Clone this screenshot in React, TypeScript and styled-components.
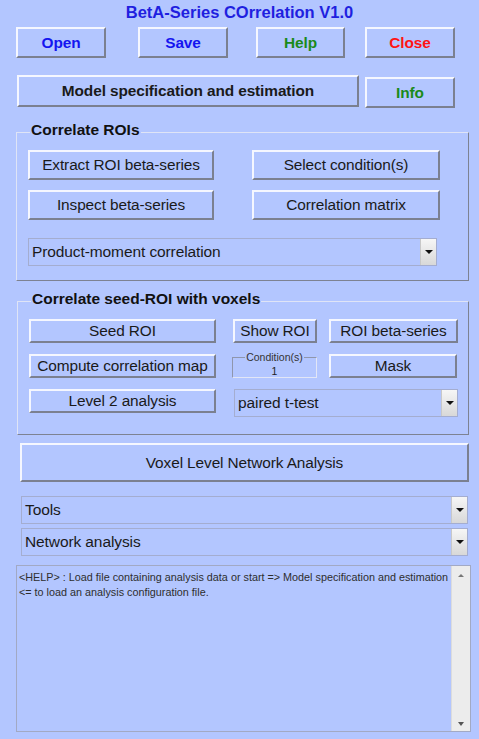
import React from 'react';
import styled, {createGlobalStyle} from 'styled-components';

const GlobalStyle = createGlobalStyle`
  html, body {
    margin: 0;
    padding: 0;
    background: #b3c6ff;
  }
  * {
    box-sizing: border-box;
  }
`

const Page = styled.div`
  width: 479px;
  height: 739px;
  background: #b3c6ff;
  font-family: "Liberation Sans", Arial, sans-serif;
  color: #1a1a1a;
  overflow: hidden;
`
const Title = styled.h1`
  margin: 0;
  height: 26px;
  line-height: 24px;
  font-size: 16.5px;
  font-weight: 700;
  text-align: center;
  color: #1f1fe0;
`
const TopRow = styled.div`
  display: grid;
  grid-template-columns: 122px 118px 109px 90px;
  padding-left: 16px;
  margin-top: 1px;
`
const ModelRow = styled.div`
  display: flex;
  align-items: flex-start;
  gap: 6px;
  padding-left: 17px;
  margin-top: 17px;
`
const Button = styled.button<{$w?: number; $h?: number; $color?: string; $bold?: boolean; $size?: number}>`
  width: ${p => p.$w ?? 90}px;
  height: ${p => p.$h ?? 31}px;
  padding: 0;
  background: #b3c6ff;
  border: 2px solid;
  border-color: #f5f7ff #7b8090 #7b8090 #f5f7ff;
  font-family: "Liberation Sans", Arial, sans-serif;
  font-size: ${p => p.$size ?? 15.4}px;
  font-weight: ${p => (p.$bold ? 700 : 400)};
  color: ${p => p.$color ?? '#1a1a1a'};
  white-space: nowrap;
  letter-spacing: -0.1px;
  cursor: pointer;
`
const Panel = styled.fieldset<{$left: number; $width: number; $top: number; $pb: number}>`
  margin: ${p => p.$top}px 0 0 ${p => p.$left}px;
  width: ${p => p.$width}px;
  padding: 10px 10px ${p => p.$pb}px 11px;
  border: 1px solid;
  border-color: #dfe4f6 #7d8292 #7d8292 #dfe4f6;
  min-width: 0;
`
const Legend = styled.legend`
  padding: 0 1px;
  margin-left: 2px;
  font-size: 15.5px;
  line-height: 16px;
  font-weight: 700;
  color: #111;
  transform: translateY(-2px);
`
const RoiGrid = styled.div`
  display: grid;
  grid-template-columns: 186px 188px;
  grid-auto-rows: 30px;
  column-gap: 38px;
  row-gap: 10px;
`
const SeedGrid = styled.div`
  display: grid;
  grid-template-columns: 187px 89px 129px;
  grid-template-rows: 24px 24px 28px;
  column-gap: 12px;
  row-gap: 11px;
`
const Cell = styled.div<{$span?: number; $ml?: number}>`
  grid-column: span ${p => p.$span ?? 1};
  margin-left: ${p => p.$ml ?? 0}px;
  display: flex;
`
const Select = styled.div<{$w: number; $h: number; $mt?: number; $ml?: number}>`
  display: flex;
  align-items: center;
  width: ${p => p.$w}px;
  height: ${p => p.$h}px;
  margin-top: ${p => p.$mt ?? 0}px;
  margin-left: ${p => p.$ml ?? 0}px;
  border: 1px solid #a4add0;
  background: #b3c6ff;
  font-size: 15.5px;
  color: #1a1a1a;
`
const SelectText = styled.span`
  flex: 1;
  padding-left: 3px;
  white-space: nowrap;
  letter-spacing: -0.1px;
`
const SelectArrow = styled.span`
  width: 16px;
  height: 100%;
  display: flex;
  align-items: center;
  justify-content: center;
  background: linear-gradient(#f6f6f6, #d8d8d8);
  border-left: 1px solid #c8c8c8;
  &::after {
    content: '';
    border-left: 4px solid transparent;
    border-right: 4px solid transparent;
    border-top: 4px solid #111;
  }
`
const CondBox = styled.fieldset`
  margin: -3px 0 0 0;
  padding: 0;
  width: 85px;
  height: 27px;
  border: 1px solid;
  border-color: #8f96ad #e2e6f6 #e2e6f6 #8f96ad;
  text-align: center;
  font-size: 10.5px;
  line-height: 16px;
  color: #222;
  min-width: 0;
`
const CondLegend = styled.legend`
  margin: 0 auto;
  padding: 0 1px;
  font-size: 10.5px;
  line-height: 12px;
  color: #333;
`
const Block = styled.div<{$mt: number; $ml: number}>`
  margin-top: ${p => p.$mt}px;
  margin-left: ${p => p.$ml}px;
`
const HelpBox = styled.div`
  display: flex;
  width: 455px;
  height: 167px;
  margin: 9px 0 0 16px;
  border: 1px solid #a2a9c4;
  background: #b3c6ff;
`
const HelpText = styled.div`
  flex: 1;
  padding: 4px 2px;
  font-size: 10.8px;
  line-height: 15px;
  color: #2e2e2e;
`
const Scrollbar = styled.div`
  width: 19px;
  display: flex;
  flex-direction: column;
  justify-content: space-between;
  align-items: center;
  padding: 8px 0 5px;
  background: #ececec;
  border-left: 1px solid #dcdcdc;
`
const ScrollArrow = styled.span<{$up?: boolean}>`
  border-left: 3px solid transparent;
  border-right: 3px solid transparent;
  ${p => (p.$up ? 'border-bottom: 3px solid #777;' : 'border-top: 4px solid #555;')}
`

const DropDown = ({label, w, h, mt, ml}: {label: string; w: number; h: number; mt?: number; ml?: number}) => (
    <Select $w={w} $h={h} $mt={mt} $ml={ml}>
        <SelectText>{label}</SelectText>
        <SelectArrow/>
    </Select>
)

const App = () => {
    return (
        <Page>
            <GlobalStyle/>
            <Title>BetA-Series COrrelation V1.0</Title>
            <TopRow>
                <Button $bold $color="#1515f0">Open</Button>
                <Button $bold $color="#1515f0">Save</Button>
                <Button $bold $w={89} $color="#1a8a1a">Help</Button>
                <Button $bold $color="#ff1414">Close</Button>
            </TopRow>
            <ModelRow>
                <Button $w={342} $h={32} $bold>Model specification and estimation</Button>
                <Button $bold $color="#1a8a1a" style={{marginTop: 2}}>Info</Button>
            </ModelRow>

            <Panel $left={16} $width={453} $top={16} $pb={14}>
                <Legend>Correlate ROIs</Legend>
                <RoiGrid>
                    <Button $w={186} $h={30}>Extract ROI beta-series</Button>
                    <Button $w={188} $h={30}>Select condition(s)</Button>
                    <Button $w={186} $h={30}>Inspect beta-series</Button>
                    <Button $w={188} $h={30}>Correlation matrix</Button>
                </RoiGrid>
                <DropDown label="Product-moment correlation" w={409} h={28} mt={18}/>
            </Panel>

            <Panel $left={17} $width={452} $top={12} $pb={17}>
                <Legend>Correlate seed-ROI with voxels</Legend>
                <SeedGrid>
                    <Cell><Button $w={187} $h={24}>Seed ROI</Button></Cell>
                    <Cell $ml={5}><Button $w={84} $h={24}>Show ROI</Button></Cell>
                    <Cell><Button $w={129} $h={24}>ROI beta-series</Button></Cell>
                    <Cell><Button $w={187} $h={24}>Compute correlation map</Button></Cell>
                    <Cell $ml={4}>
                        <CondBox>
                            <CondLegend>Condition(s)</CondLegend>
                            1
                        </CondBox>
                    </Cell>
                    <Cell><Button $w={128} $h={24}>Mask</Button></Cell>
                    <Cell><Button $w={187} $h={24}>Level 2 analysis</Button></Cell>
                    <Cell $span={2} $ml={6}>
                        <DropDown label="paired t-test" w={226} h={28}/>
                    </Cell>
                </SeedGrid>
            </Panel>

            <Block $mt={8} $ml={20}>
                <Button $w={449} $h={39}>Voxel Level Network Analysis</Button>
            </Block>
            <Block $mt={14} $ml={21}>
                <DropDown label="Tools" w={447} h={28}/>
                <DropDown label="Network analysis" w={447} h={28} mt={4}/>
            </Block>

            <HelpBox>
                <HelpText>
                    &lt;HELP&gt; : Load file containing analysis data or start =&gt; Model specification and estimation
                    &lt;= to load an analysis configuration file.
                </HelpText>
                <Scrollbar>
                    <ScrollArrow $up/>
                    <ScrollArrow/>
                </Scrollbar>
            </HelpBox>
        </Page>
    );
};

export default App;
